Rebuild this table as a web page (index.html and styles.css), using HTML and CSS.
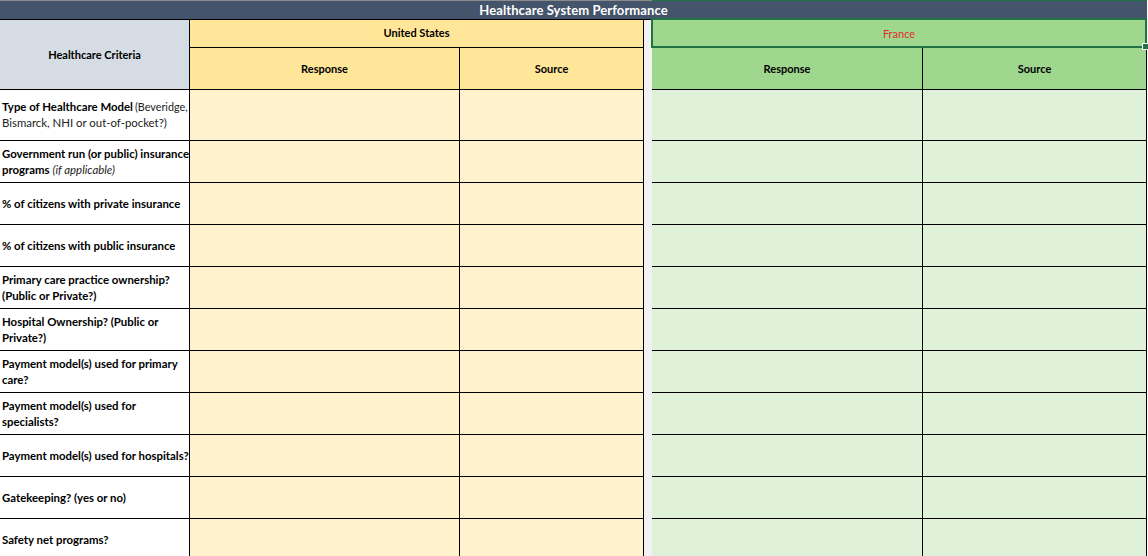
FILE: index.html
```html
<!DOCTYPE html>
<html lang="en">
<head>
<meta charset="utf-8">
<title>Healthcare System Performance</title>
<link rel="stylesheet" href="styles.css">
</head>
<body>
<div class="sheet">
  <div class="strip strip-gray"></div>
  <div class="strip strip-green"></div>

  <div class="title">Healthcare System Performance</div>

  <div class="crit-head">Healthcare Criteria</div>
  <div class="country us">United States</div>
  <div class="gap"></div>
  <div class="country fr">France<span class="sel"><span class="handle"></span></span></div>

  <div class="sub us-sub">Response</div>
  <div class="sub us-sub">Source</div>
  <div class="sub fr-sub">Response</div>
  <div class="sub fr-sub">Source</div>

  <div class="crit"><p class="ct"><span class="nw"><b>Type of Healthcare Model</b><span class="note tight">(Beveridge,</span></span> <span class="note">Bismarck, NHI or out-of-pocket?)</span></p></div>
  <div class="cell y"></div><div class="cell y"></div><div class="cell g"></div><div class="cell g"></div>

  <div class="crit"><p class="ct"><b class="nw">Government run (or public) insurance</b> <b>programs</b> <i class="note">(if applicable)</i></p></div>
  <div class="cell y"></div><div class="cell y"></div><div class="cell g"></div><div class="cell g"></div>

  <div class="crit"><p class="ct"><b>% of citizens with private insurance</b></p></div>
  <div class="cell y"></div><div class="cell y"></div><div class="cell g"></div><div class="cell g"></div>

  <div class="crit"><p class="ct"><b>% of citizens with public insurance</b></p></div>
  <div class="cell y"></div><div class="cell y"></div><div class="cell g"></div><div class="cell g"></div>

  <div class="crit"><p class="ct"><b>Primary care practice ownership? (Public or Private?)</b></p></div>
  <div class="cell y"></div><div class="cell y"></div><div class="cell g"></div><div class="cell g"></div>

  <div class="crit"><p class="ct"><b>Hospital Ownership? (Public or Private?)</b></p></div>
  <div class="cell y"></div><div class="cell y"></div><div class="cell g"></div><div class="cell g"></div>

  <div class="crit"><p class="ct"><b>Payment model(s) used for primary care?</b></p></div>
  <div class="cell y"></div><div class="cell y"></div><div class="cell g"></div><div class="cell g"></div>

  <div class="crit"><p class="ct"><b>Payment model(s) used for specialists?</b></p></div>
  <div class="cell y"></div><div class="cell y"></div><div class="cell g"></div><div class="cell g"></div>

  <div class="crit"><p class="ct"><b>Payment model(s) used for hospitals?</b></p></div>
  <div class="cell y"></div><div class="cell y"></div><div class="cell g"></div><div class="cell g"></div>

  <div class="crit"><p class="ct"><b>Gatekeeping? (yes or no)</b></p></div>
  <div class="cell y"></div><div class="cell y"></div><div class="cell g"></div><div class="cell g"></div>

  <div class="crit"><p class="ct"><b>Safety net programs?</b></p></div>
  <div class="cell y"></div><div class="cell y"></div><div class="cell g"></div><div class="cell g"></div>
</div>
</body>
</html>
```

FILE: styles.css
```css
html, body {
  margin: 0;
  padding: 0;
  background: #ffffff;
  overflow: hidden;
}

body {
  width: 1148px;
  height: 556px;
  font-family: Lato, "Open Sans", "Liberation Sans", sans-serif;
  font-size: 11px;
  color: #000;
}

.sheet {
  display: grid;
  grid-template-columns: 190px 270px 184px 8px 271px 224px;
  grid-template-rows: 1px 19px 28px 42px 51px repeat(10, 42px);
}

.sheet > div {
  box-sizing: border-box;
}

.strip-gray {
  grid-column: 1 / span 4;
  background: #8c8c8c;
}

.strip-green {
  grid-column: 5 / span 2;
  background: #217346;
}

.title {
  grid-column: 1 / span 6;
  background: #44546a;
  color: #ffffff;
  font-size: 13px;
  font-weight: 700;
  display: flex;
  align-items: center;
  justify-content: center;
  border-bottom: 1px solid #000;
  letter-spacing: 0.1px;
}

.crit-head {
  grid-column: 1;
  grid-row: 3 / span 2;
  background: #d6dce4;
  font-weight: 700;
  display: flex;
  align-items: center;
  justify-content: center;
  border-right: 1px solid #000;
  border-bottom: 1px solid #000;
}

.country {
  display: flex;
  align-items: center;
  justify-content: center;
  border-bottom: 1px solid #000;
  border-right: 1px solid #000;
}

.us {
  grid-column: 2 / span 2;
  background: #ffe699;
  font-weight: 700;
  padding-bottom: 2px;
}

.gap {
  grid-column: 4;
  grid-row: 3 / span 13;
  background: #f2f2f2;
}

.fr {
  grid-column: 5 / span 2;
  background: #a0d78f;
  color: #e02b2b;
  position: relative;
}

.sel {
  position: absolute;
  top: -2px;
  left: -1px;
  right: -1px;
  bottom: -1px;
  border: 2px solid #217346;
}

.handle {
  position: absolute;
  right: -4px;
  bottom: -4px;
  width: 5px;
  height: 5px;
  background: #217346;
  border: 1px solid #ffffff;
}

.sub {
  display: flex;
  align-items: center;
  justify-content: center;
  font-weight: 700;
  border-right: 1px solid #000;
  border-bottom: 1px solid #000;
}

.us-sub {
  background: #ffe699;
}

.fr-sub {
  background: #a0d78f;
}

.crit {
  display: flex;
  align-items: center;
  padding: 0 0 0 2px;
  border-right: 1px solid #000;
  border-bottom: 1px solid #000;
  background: #ffffff;
}

.ct {
  margin: 0;
  font-size: 11.4px;
  line-height: 16px;
}

.ct b {
  font-weight: 700;
}

.nw {
  white-space: nowrap;
}

.note {
  font-weight: 400;
  color: #222;
}

.tight {
  font-size: 10.8px;
  margin-left: 2px;
}

.cell {
  border-right: 1px solid #000;
  border-bottom: 1px solid #000;
}

.cell.y {
  background: #fff2cc;
}

.cell.g {
  background: #e0f1d9;
}
```
